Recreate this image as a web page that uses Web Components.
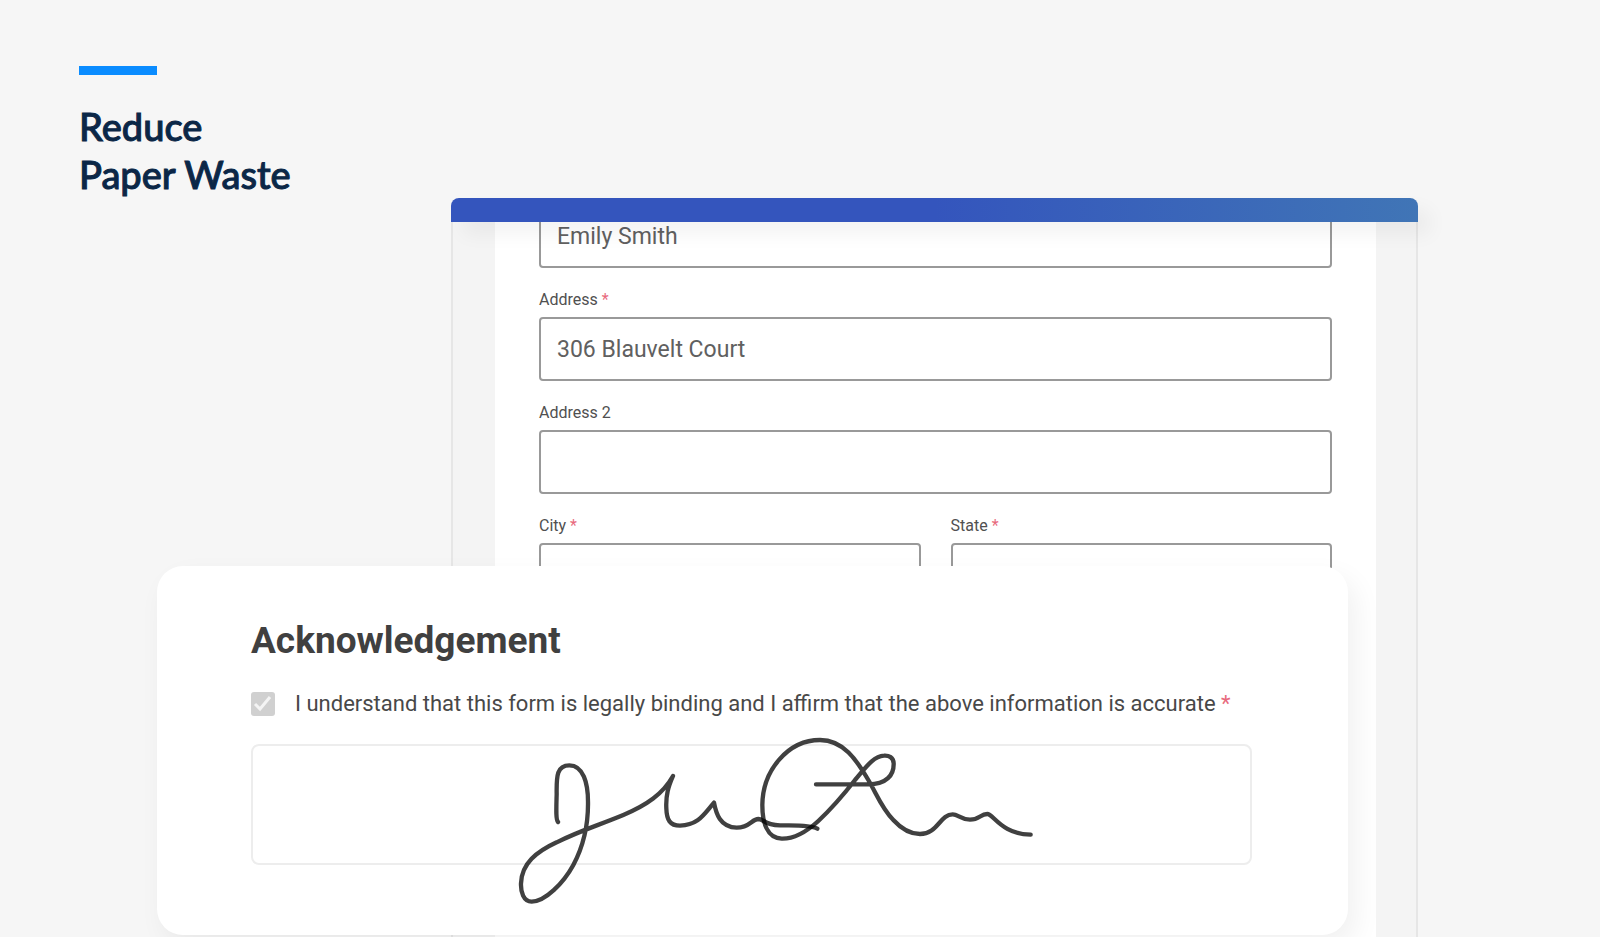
<!DOCTYPE html>
<html lang="en">
<head>
<meta charset="utf-8">
<meta name="viewport" content="width=device-width, initial-scale=1">
<title>Reduce Paper Waste</title>
<style>
    body {
        margin: 0;
        background: #f6f6f6;
        font-family: Roboto, "Liberation Sans", sans-serif;
        color: #484848;
    }
</style>
</head>
<body>
<paper-waste-slide></paper-waste-slide>

<script>
/**
 * Creates a shadow root on the host and fills it with the given markup.
 */
function attach(host, html) {
    host.attachShadow({ mode: 'open' }).innerHTML = html;
}

/**
 * Section title with an accent bar above it.
 *
 * Usage: <accent-title>Some title</accent-title>
 */
class AccentTitle extends HTMLElement {
    constructor() {
        super();
        attach(this, `
            <style>
                :host {
                    display: block;
                    padding: 66px 0 0 79px;
                }
                .bar {
                    width: 78px;
                    height: 9px;
                    margin-bottom: 27px;
                    background: #0a8cff;
                }
                h1 {
                    margin: 0;
                    font: 500 38px/48px Lato, sans-serif;
                    color: #0b2747;
                    -webkit-text-stroke: 1px #0b2747;
                }
            </style>
            <div class="bar"></div>
            <h1><slot></slot></h1>
        `);
    }
}

/**
 * Labelled text box.
 *
 * Attributes:
 *   - label: text above the box
 *   - name: accessible name, used when there is no visible label
 *   - value: text in the box
 *   - required: adds the red star
 */
class FormField extends HTMLElement {
    connectedCallback() {
        if (this.shadowRoot) return;

        const label = this.getAttribute('label');
        const name = this.getAttribute('name');
        const value = this.getAttribute('value') || '';
        const star = this.hasAttribute('required') ? ' <span>*</span>' : '';

        attach(this, `
            <style>
                :host {
                    display: block;
                    min-width: 0;
                }
                label {
                    display: block;
                    margin-bottom: 7px;
                    font-size: 16px;
                    line-height: 20px;
                    color: #505050;
                }
                span {
                    color: #e86a7d;
                }
                input {
                    display: block;
                    box-sizing: border-box;
                    width: 100%;
                    height: 64px;
                    padding: 0 16px;
                    border: 2px solid #999;
                    border-radius: 4px;
                    background: transparent;
                    font: 23px/32px Roboto, "Liberation Sans", sans-serif;
                    color: #606060;
                }
            </style>
            ${label ? `<label for="box">${label}${star}</label>` : ''}
            <input id="box" type="text" value="${value}" ${name ? `aria-label="${name}"` : ''}>
        `);
    }
}

/**
 * Browser-like frame: gradient title bar over a clipped white page.
 */
class BrowserFrame extends HTMLElement {
    constructor() {
        super();
        attach(this, `
            <style>
                :host {
                    display: flex;
                    flex-direction: column;
                    min-height: 0;
                }
                header {
                    flex: none;
                    height: 24px;
                    border-radius: 8px 8px 0 0;
                    background: linear-gradient(90deg, #3455bd 50%, #4075b6);
                    box-shadow: 12px 12px 20px rgba(0, 0, 0, .05);
                    z-index: 1;
                }
                .view {
                    flex: 1 1 0;
                    min-height: 0;
                    overflow: hidden;
                    padding: 0 40px 0 42px;
                    border: solid #e6e6e6;
                    border-width: 0 2px;
                    background: #f4f4f4;
                }
                .page {
                    display: flow-root;
                    height: 100%;
                    box-sizing: border-box;
                    padding: 0 44px;
                    background: #fff;
                }
            </style>
            <header></header>
            <div class="view">
                <div class="page"><slot></slot></div>
            </div>
        `);
    }
}

/**
 * Address form, scrolled so that the first box is partly under the title bar.
 */
class AddressForm extends HTMLElement {
    constructor() {
        super();
        attach(this, `
            <style>
                :host {
                    display: block;
                    margin-top: -18px;
                }
                form, .row {
                    display: grid;
                    gap: 22px 30px;
                }
                .row {
                    grid-template-columns: 1fr 1fr;
                }
            </style>
            <form>
                <form-field name="Name" value="Emily Smith"></form-field>
                <form-field label="Address" value="306 Blauvelt Court" required></form-field>
                <form-field label="Address 2"></form-field>
                <div class="row">
                    <form-field label="City" required></form-field>
                    <form-field label="State" required></form-field>
                </div>
            </form>
        `);
    }
}

/**
 * Signature box. The ink is taller than the box, so it overflows.
 */
class SignaturePad extends HTMLElement {
    constructor() {
        super();
        attach(this, `
            <style>
                :host {
                    display: flex;
                    justify-content: center;
                    border: 2px solid #ededed;
                    border-radius: 8px;
                }
                svg {
                    width: 500px;
                    height: 117px;
                    overflow: visible;
                    fill: none;
                    stroke: rgba(0, 0, 0, .75);
                    stroke-width: 13;
                    stroke-linecap: round;
                    stroke-linejoin: round;
                }
            </style>
            <svg viewBox="-24 78 1500 351" role="img" aria-label="Signature">
                <path d="M144 306C137 300 139 260 140 222C139 165 142 136 178 136C220 136 234 190 234 245C235 310 222 375 190 435C160 490 105 545 65 545C40 545 32 515 33 490C35 430 80 395 140 367C210 332 260 318 340 285C410 255 459 222 489 168C475 200 467 225 469 265C470 300 480 317 510 317C565 315 580 285 612 248C618 280 630 322 680 323C720 323 725 297 745 297C765 298 760 315 810 316C850 317 900 314 922 326"/>
                <path transform="translate(690)" d="M228 193H385C440 193 462 165 461 130C460 112 447 106 432 107C400 108 375 145 345 180C310 225 270 270 235 303C200 335 160 357 125 356C80 354 67 305 67 255C68 150 145 60 240 60C310 60 350 120 385 180C410 222 425 265 460 300C490 333 515 342 540 342C593 342 600 283 638 283C655 283 660 298 690 299C720 299 720 282 742 282C760 282 785 343 872 344"/>
            </svg>
        `);
    }
}

class AcknowledgementCard extends HTMLElement {
    constructor() {
        super();
        attach(this, `
            <style>
                :host {
                    display: block;
                    padding: 51px 96px 70px 94px;
                    border-radius: 26px;
                    background: #fff;
                    box-shadow: 8px 12px 28px rgba(0, 0, 0, .06);
                }
                h2 {
                    margin: 0 0 22px;
                    font-size: 37px;
                    line-height: 48px;
                    font-weight: 700;
                    color: #404040;
                }
                .consent {
                    display: flex;
                    align-items: center;
                    gap: 20px;
                    margin-bottom: 23px;
                    font-size: 22px;
                    line-height: 34px;
                }
                .tick {
                    display: grid;
                    flex: none;
                }
                .tick > * {
                    grid-area: 1 / 1;
                    width: 24px;
                    height: 24px;
                    margin: 0;
                }
                input {
                    appearance: none;
                    border-radius: 3px;
                    background: #d0d0d0;
                }
                svg {
                    fill: none;
                    stroke: #f4f4f4;
                    stroke-width: 3;
                    pointer-events: none;
                }
                .star {
                    color: #e86a7d;
                }
            </style>
            <h2>Acknowledgement</h2>
            <div class="consent">
                <div class="tick">
                    <input id="agree" type="checkbox" checked disabled>
                    <svg viewBox="0 0 24 24" aria-hidden="true"><path d="M4 12L9 17L19 5"/></svg>
                </div>
                <label for="agree">I understand that this form is legally binding and I affirm that the above information is accurate <span class="star">*</span></label>
            </div>
            <signature-pad></signature-pad>
        `);
    }
}

/**
 * The whole slide. The card and the frame share grid cells, card on top.
 */
class PaperWasteSlide extends HTMLElement {
    constructor() {
        super();
        attach(this, `
            <style>
                :host {
                    display: grid;
                    grid-template-columns: 157px 294px minmax(0, 1fr) 70px 182px;
                    grid-template-rows: 198px 368px minmax(371px, 1fr);
                    min-height: 100vh;
                    overflow: hidden;
                }
                accent-title {
                    grid-area: 1 / 1 / 2 / -1;
                }
                browser-frame {
                    grid-area: 2 / 3 / 4 / 5;
                }
                acknowledgement-card {
                    grid-area: 3 / 2 / 4 / 4;
                    align-self: start;
                    z-index: 2;
                }
            </style>
            <accent-title>Reduce<br>Paper Waste</accent-title>
            <browser-frame>
                <address-form></address-form>
            </browser-frame>
            <acknowledgement-card></acknowledgement-card>
        `);
    }
}

customElements.define('accent-title', AccentTitle);
customElements.define('form-field', FormField);
customElements.define('browser-frame', BrowserFrame);
customElements.define('address-form', AddressForm);
customElements.define('signature-pad', SignaturePad);
customElements.define('acknowledgement-card', AcknowledgementCard);
customElements.define('paper-waste-slide', PaperWasteSlide);
</script>
</body>
</html>
